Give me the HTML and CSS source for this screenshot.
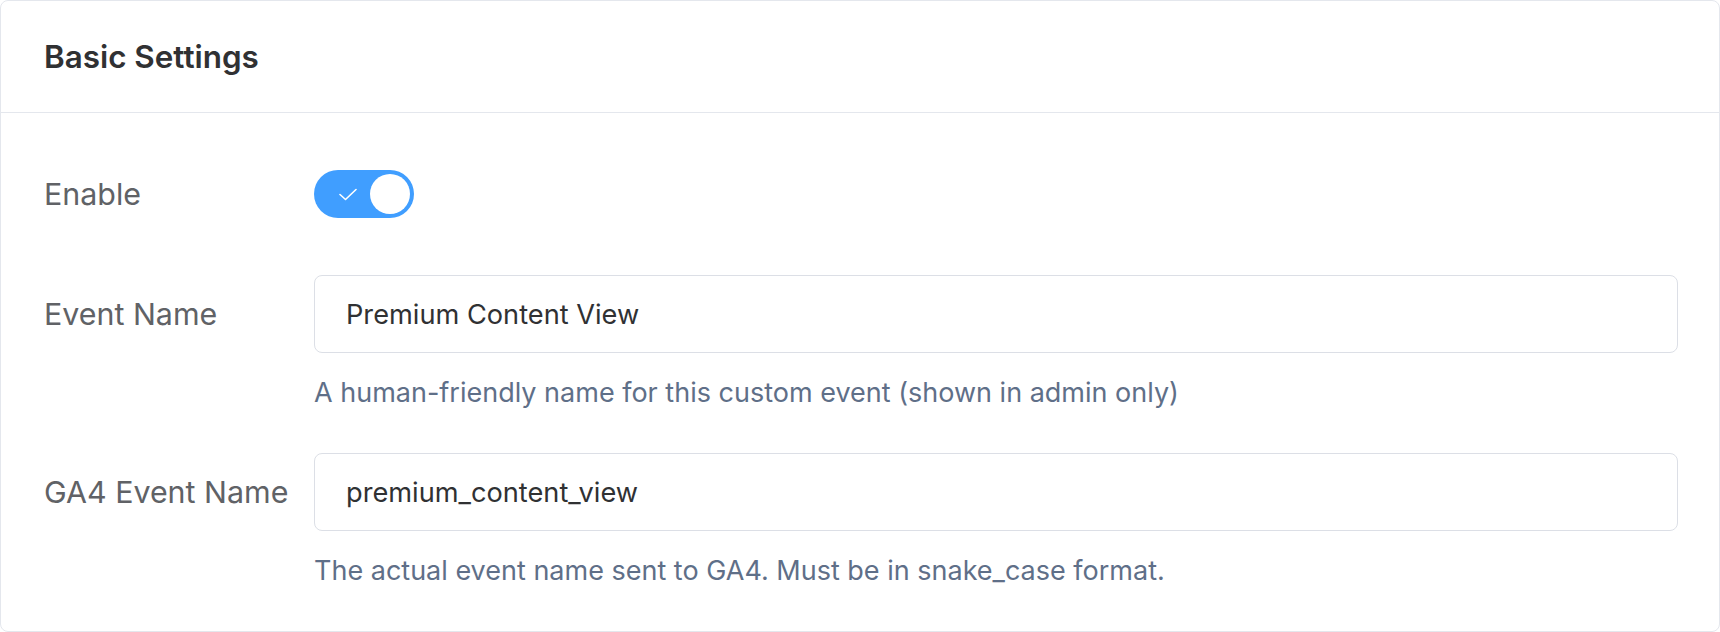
FILE: index.html
```html
<!DOCTYPE html>
<html lang="en">
<head>
<meta charset="utf-8">
<title>Basic Settings</title>
<link rel="stylesheet" href="styles.css">
</head>
<body>
<div class="card">
  <div class="card-header">
    <h2 class="card-title">Basic Settings</h2>
  </div>
  <div class="card-body">
    <div class="form-item switch-item">
      <label class="form-label">Enable</label>
      <div class="form-control">
        <span class="switch is-checked" role="switch" aria-checked="true">
          <span class="switch-inner">
            <svg class="switch-check" width="18" height="13" viewBox="0 0 18 13" fill="none">
              <path d="M1 6.5 L6.5 11.5 L17 1.5" stroke="#ffffff" stroke-width="1.6" stroke-linecap="round" stroke-linejoin="round"/>
            </svg>
          </span>
          <span class="switch-knob"></span>
        </span>
      </div>
    </div>

    <div class="form-item">
      <label class="form-label">Event Name</label>
      <div class="form-control">
        <div class="input"><span class="input-value">Premium Content View</span></div>
        <div class="help">A human-friendly name for this custom event (shown in admin only)</div>
      </div>
    </div>

    <div class="form-item">
      <label class="form-label">GA4 Event Name</label>
      <div class="form-control">
        <div class="input"><span class="input-value">premium_content_view</span></div>
        <div class="help">The actual event name sent to GA4. Must be in snake_case format.</div>
      </div>
    </div>
  </div>
</div>
</body>
</html>
```

FILE: styles.css
```css
* {
  box-sizing: border-box;
}

html, body {
  margin: 0;
  padding: 0;
  background: #ffffff;
}

body {
  font-family: "Inter", "Noto Sans", "Liberation Sans", sans-serif;
  width: 1720px;
  height: 632px;
  overflow: hidden;
}

.card {
  width: 1720px;
  height: 632px;
  border: 1px solid #e4e7ed;
  border-radius: 8px;
  background: #ffffff;
  overflow: hidden;
}

.card-header {
  height: 112px;
  border-bottom: 1px solid #e4e7ed;
  display: flex;
  align-items: center;
  padding: 0 43px;
}

.card-title {
  margin: 0;
  font-size: 31.4px;
  font-weight: 600;
  color: #303133;
  letter-spacing: 0;
}

.card-body {
  padding: 42px 41px 0 43px;
  display: flex;
  flex-direction: column;
}

.form-item {
  display: grid;
  grid-template-columns: 270px 1fr;
  align-items: start;
  margin-bottom: 42px;
}

.switch-item {
  margin-bottom: 42px;
}

.form-label {
  height: 78px;
  display: flex;
  align-items: center;
  font-size: 30.4px;
  color: #606266;
}

.form-control {
  display: flex;
  flex-direction: column;
  min-width: 0;
}

.switch-item .form-control {
  height: 78px;
  justify-content: center;
}

.switch {
  width: 100px;
  height: 48px;
  border-radius: 24px;
  background: #409eff;
  display: flex;
  align-items: center;
  justify-content: space-between;
  padding: 4px;
}

.switch-inner {
  flex: 1;
  display: flex;
  align-items: center;
  justify-content: center;
  padding-left: 10px;
  padding-right: 2px;
}

.switch-check {
  display: block;
}

.switch-knob {
  width: 40px;
  height: 40px;
  border-radius: 50%;
  background: #ffffff;
}

.input {
  height: 78px;
  border: 1px solid #dcdfe6;
  border-radius: 8px;
  padding: 0 31px;
  display: flex;
  align-items: center;
  background: #ffffff;
}

.input-value {
  font-size: 27.2px;
  color: #303133;
}

.help {
  margin-top: 22px;
  font-size: 27px;
  line-height: 36px;
  color: #5f6f88;
}
```
